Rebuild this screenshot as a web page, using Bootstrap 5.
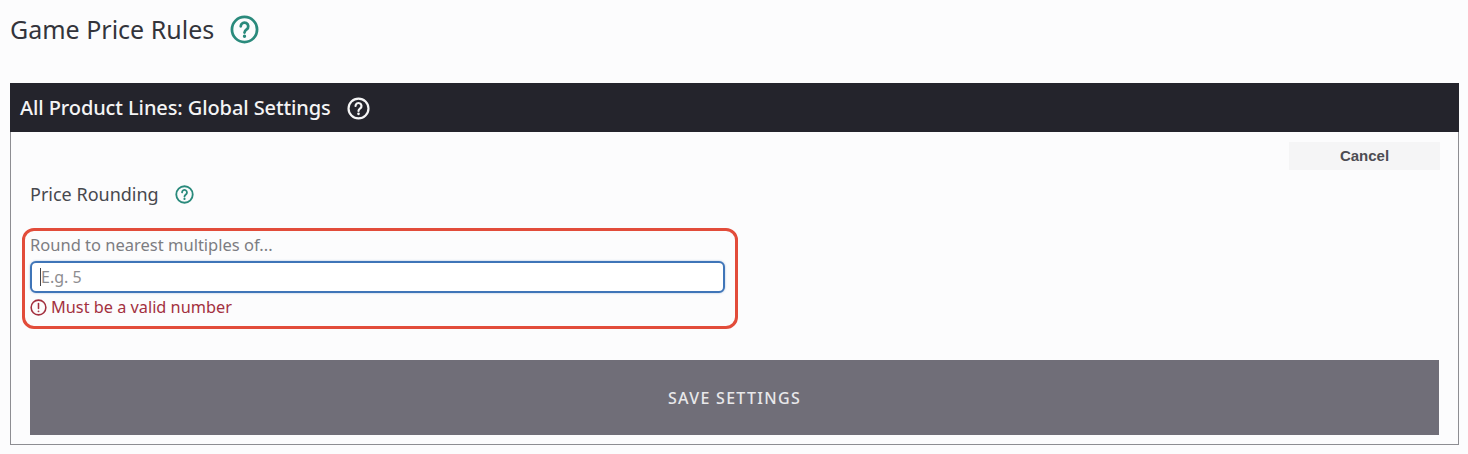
<!DOCTYPE html>
<html lang="en">
<head>
  <title>Game Price Rules</title>
  <meta charset="UTF-8">
  <meta name="viewport" content="width=device-width, initial-scale=1.0">
  <link rel="stylesheet" href="https://cdn.jsdelivr.net/npm/bootstrap@5.3.0/dist/css/bootstrap.min.css">
  <style>
    html, body {
      height: 454px;
      overflow: hidden;
    }
    body {
      background-color: #fcfcfd;
      font-family: "Noto Sans", "Liberation Sans", sans-serif;
      color: #33343b;
    }
    .page-wrap {
      padding: 12px 9px 0 10px;
    }
    .page-title {
      font-size: 25px;
      line-height: 34px;
      font-weight: 400;
      margin: 0;
      gap: 16px;
    }
    .help-teal { color: #2a8a7c; }
    .panel-box {
      margin-top: 37px;
      height: 362px;
      border: 1px solid #8d8d92;
      border-top: 0;
      border-radius: 0;
    }
    .panel-head {
      height: 49px;
      margin: 0 -1px;
      padding: 1px 10px 0;
      gap: 16px;
      background-color: #24242c;
      color: #f4f4f5;
      font-size: 20px;
      font-weight: 500;
      letter-spacing: -0.1px;
    }
    .panel-inner {
      padding: 10px 19px 0 19px;
    }
    .btn-cancel {
      width: 151px;
      height: 28px;
      margin-right: -1px;
      padding: 0;
      background-color: #f5f5f6;
      border: 0;
      border-radius: 0;
      color: #4d4d53;
      font-family: "Liberation Sans", sans-serif;
      font-size: 15px;
      font-weight: 700;
    }
    .rounding-title {
      margin-top: 10px;
      font-size: 18px;
      line-height: 28px;
      gap: 16px;
      color: #47484e;
    }
    .note-box {
      width: 716px;
      height: 101px;
      margin: 20px 0 0 -8px;
      padding: 3px 10px 0 5px;
      border: 3px solid #e24c3a;
      border-radius: 12px;
    }
    .field-label {
      margin: 0;
      font-size: 16.5px;
      line-height: 22px;
      color: #7c7d82;
    }
    .input-holder {
      margin-top: 5px;
    }
    .field-input.form-control {
      height: 32px;
      padding: 0 9px;
      border: 2px solid #3f75b8;
      border-radius: 6px;
      background-color: #fff;
      box-shadow: 0 0 2px rgba(63, 117, 184, .5);
      font-size: 16px;
    }
    .field-input::placeholder { color: #8d8d90; opacity: 1; }
    .caret-line {
      position: absolute;
      left: 10px;
      top: 7px;
      width: 1px;
      height: 18px;
      background-color: #44454b;
    }
    .field-error {
      margin-top: 3px;
      gap: 4px;
      font-size: 16.3px;
      line-height: 22px;
      color: #a3303f;
    }
    .btn-save {
      height: 75px;
      margin-top: 31px;
      background-color: #706e78;
      border: 0;
      border-radius: 0;
      color: #e8e8ea;
      font-size: 16px;
      font-weight: 500;
      letter-spacing: 1.3px;
    }
  </style>
</head>
<body>
  <div class="page-wrap">
    <h1 class="page-title d-flex align-items-center">
      Game Price Rules
      <svg class="help-teal" width="29" height="29" viewBox="0 0 24 24" fill="none" stroke="currentColor" stroke-width="2.3" stroke-linecap="round">
        <circle cx="12" cy="12" r="10.4"/>
        <path d="M8.9 9.3a3.1 3.1 0 1 1 4.9 2.6c-1.1.8-1.8 1.3-1.8 2.6"/>
        <circle cx="12" cy="17.6" r=".7" fill="currentColor" stroke-width="1.4"/>
      </svg>
    </h1>

    <div class="panel-box">
      <div class="panel-head d-flex align-items-center">
        All Product Lines: Global Settings
        <svg width="23" height="23" viewBox="0 0 24 24" fill="none" stroke="currentColor" stroke-width="2.3" stroke-linecap="round">
          <circle cx="12" cy="12" r="10.4"/>
          <path d="M8.9 9.3a3.1 3.1 0 1 1 4.9 2.6c-1.1.8-1.8 1.3-1.8 2.6"/>
          <circle cx="12" cy="17.6" r=".7" fill="currentColor" stroke-width="1.4"/>
        </svg>
      </div>
      <div class="panel-inner">
        <div class="d-flex justify-content-end">
          <button type="button" class="btn btn-cancel">Cancel</button>
        </div>
        <div class="rounding-title d-flex align-items-center">
          Price Rounding
          <svg class="help-teal" width="19" height="19" viewBox="0 0 24 24" fill="none" stroke="currentColor" stroke-width="2.3" stroke-linecap="round">
            <circle cx="12" cy="12" r="10.4"/>
            <path d="M8.9 9.3a3.1 3.1 0 1 1 4.9 2.6c-1.1.8-1.8 1.3-1.8 2.6"/>
            <circle cx="12" cy="17.6" r=".7" fill="currentColor" stroke-width="1.4"/>
          </svg>
        </div>
        <div class="note-box">
          <label class="field-label d-block" for="roundTo">Round to nearest multiples of...</label>
          <div class="input-holder position-relative">
            <input class="form-control field-input" id="roundTo" type="text" placeholder="E.g. 5">
            <span class="caret-line"></span>
          </div>
          <div class="field-error d-flex align-items-center">
            <svg width="17" height="17" viewBox="0 0 24 24" fill="none" stroke="currentColor" stroke-width="2.2" stroke-linecap="round">
              <circle cx="12" cy="12" r="10.4"/>
              <path d="M12 6.5v7"/>
              <circle cx="12" cy="17.4" r=".5" fill="currentColor" stroke-width="1.6"/>
            </svg>
            Must be a valid number
          </div>
        </div>
        <button type="button" class="btn btn-save w-100">SAVE SETTINGS</button>
      </div>
    </div>
  </div>
  <script src="https://cdn.jsdelivr.net/npm/bootstrap@5.3.0/dist/js/bootstrap.bundle.min.js"></script>
</body>
</html>
